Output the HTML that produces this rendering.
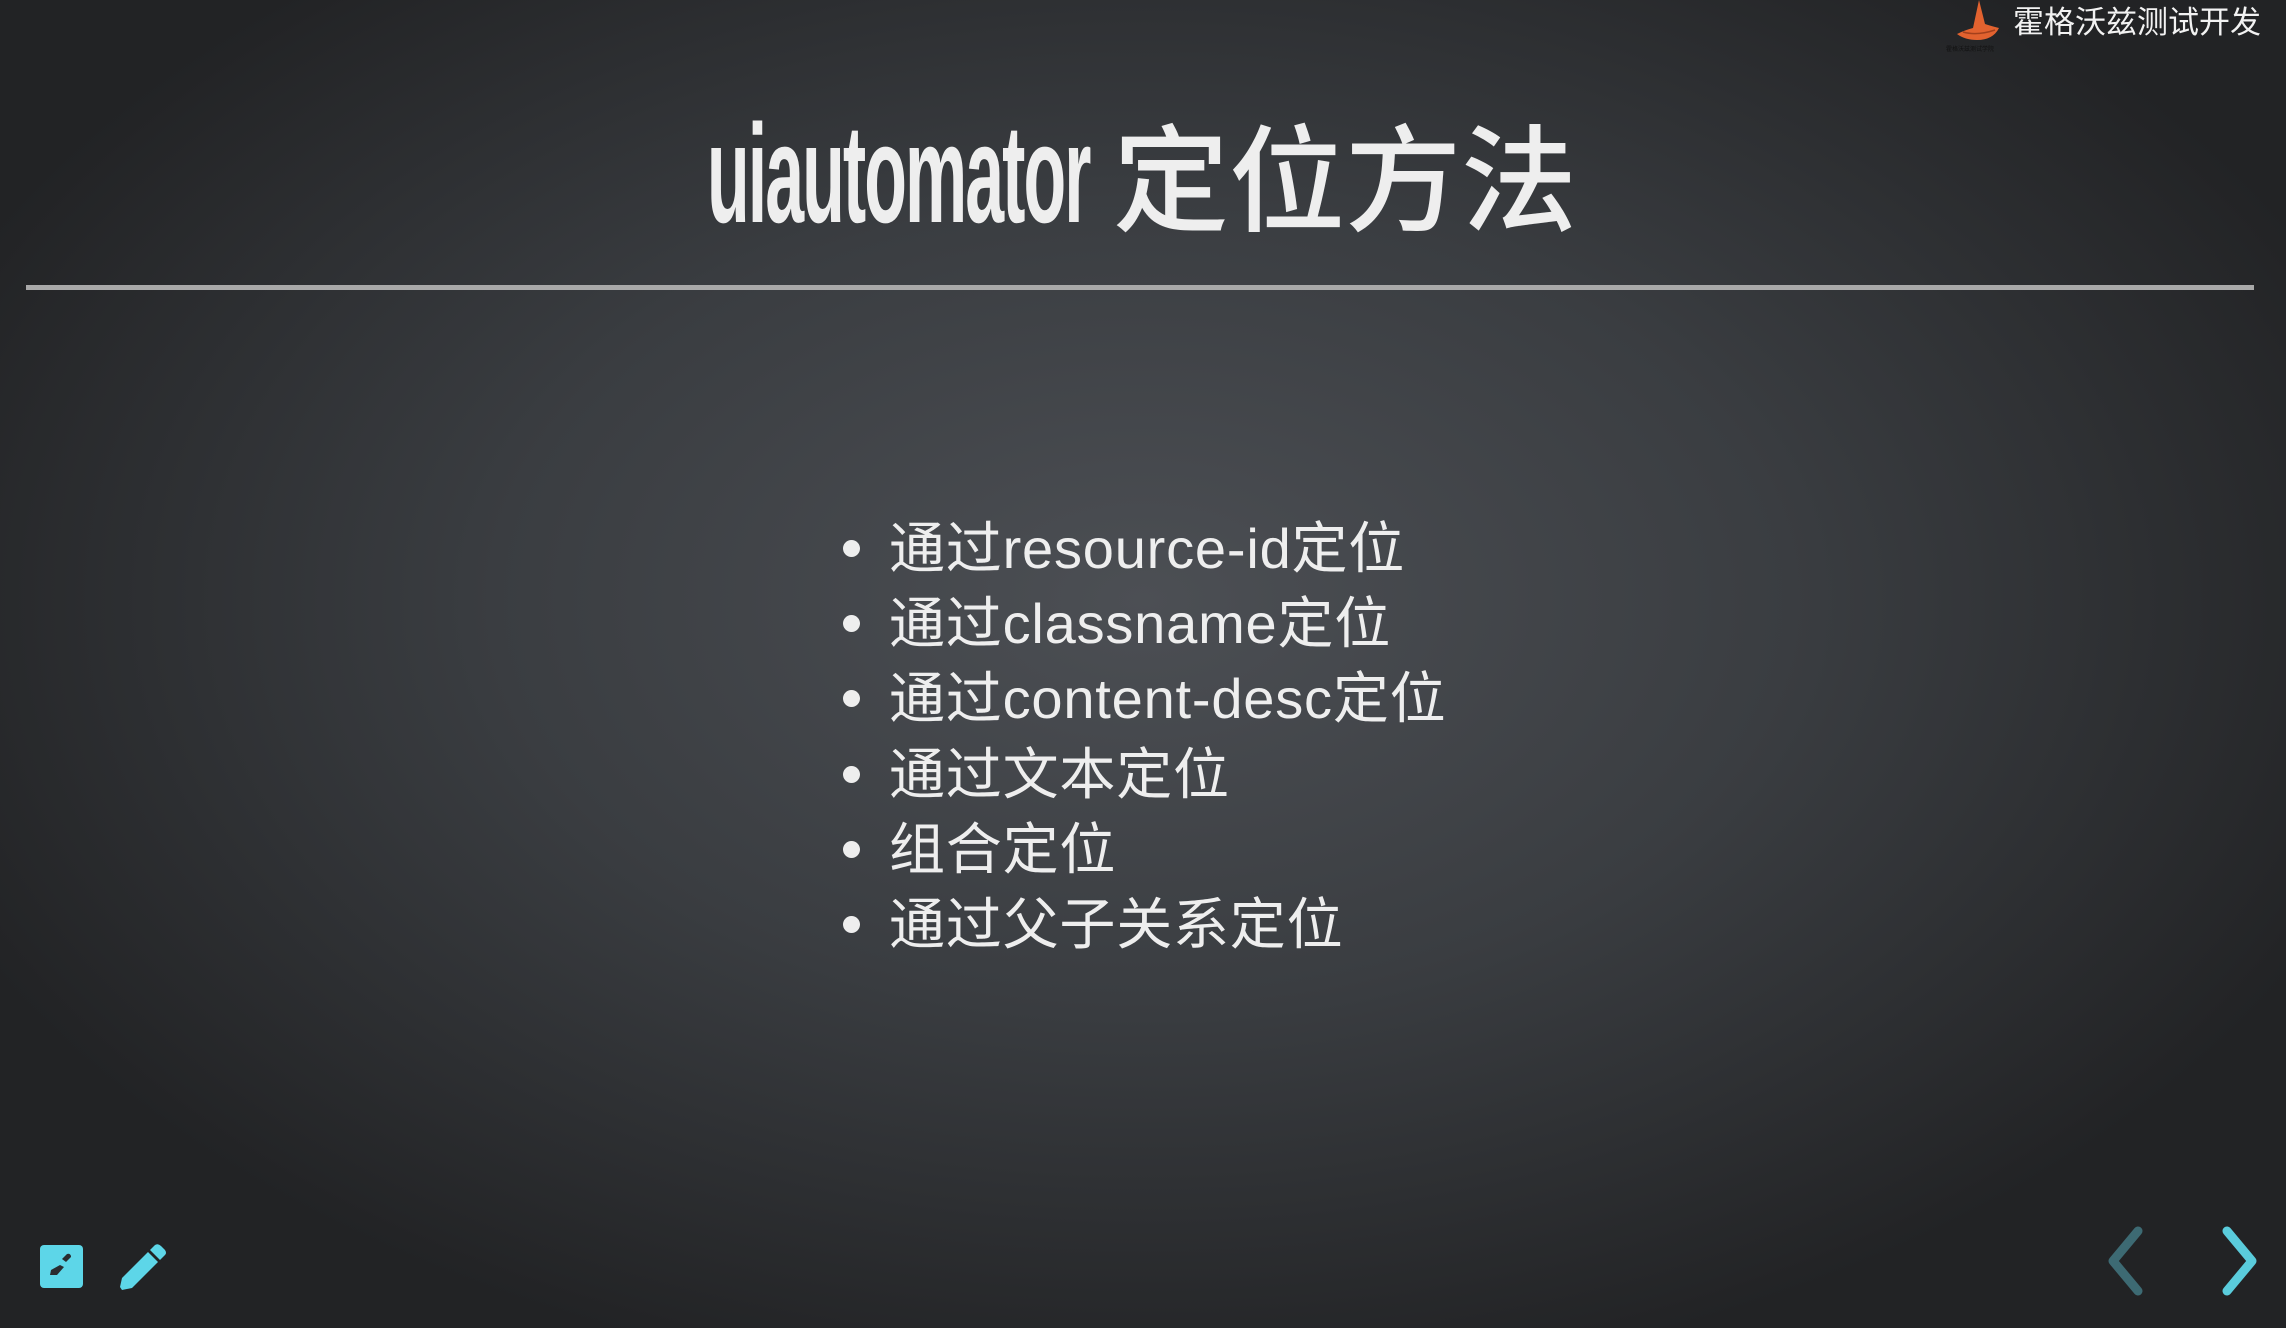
<!DOCTYPE html>
<html><head><meta charset="utf-8"><style>
html,body{margin:0;padding:0;}
body{width:2286px;height:1328px;overflow:hidden;position:relative;
background:radial-gradient(ellipse 1300px 800px at 1143px 600px,#4c4f54 0%,#3a3d41 50%,#222325 100%);
font-family:"Liberation Sans","Noto Sans CJK SC",sans-serif;color:#eeeeee;}
.en{position:absolute;left:707px;top:104px;white-space:nowrap;font-weight:bold;font-size:140px;letter-spacing:-4px;transform:scaleX(0.50);transform-origin:left center;line-height:140px;}
.zh{position:absolute;left:1113px;top:112px;white-space:nowrap;font-size:116px;line-height:140px;font-weight:500}
.rule{position:absolute;left:26px;top:285px;width:2228px;height:5px;background:#a9a9a9;}
ul{position:absolute;left:889px;top:511px;margin:0;padding:0;list-style:none;}
li{font-size:56px;line-height:75.2px;height:75.2px;position:relative;white-space:nowrap;letter-spacing:0.8px}
li:before{content:"";position:absolute;left:-46px;top:29px;width:17px;height:17px;border-radius:50%;background:#eee;}
.logo{position:absolute;left:2013px;top:-3px;font-size:31px;color:#f2f2f2;white-space:nowrap}
.small{position:absolute;left:1946px;top:44px;font-size:6px;color:#111;}
</style></head><body>
<svg style="position:absolute;left:1955px;top:0" width="50" height="44" viewBox="0 0 50 44">
<path d="M24 0 L30 24 Q36 26 44 28 Q38 40 22 40 Q10 40 2 34 Q10 30 18 28 Z" fill="#e2622f"/>
<path d="M8 32 Q22 36 40 30" stroke="#a3401c" stroke-width="1.5" fill="none"/>
</svg>
<div class="small">霍格沃兹测试学院</div>
<div class="logo">霍格沃兹测试开发</div>
<div class="en">uiautomator</div><div class="zh">定位方法</div>
<div class="rule"></div>
<ul>
<li>通过resource-id定位</li>
<li>通过classname定位</li>
<li>通过content-desc定位</li>
<li>通过文本定位</li>
<li>组合定位</li>
<li>通过父子关系定位</li>
</ul>
<svg style="position:absolute;left:40px;top:1245px" width="43" height="43" viewBox="0 0 43 43">
<rect x="0" y="0" width="43" height="43" rx="4" fill="#5dd6e8"/>
<path d="M22 14 L27 9 Q30 8 31 11 L31 12 L26 17 Z" fill="#2a2c2f"/>
<path d="M10 30 L11 25 L20 20 L24 22 L17 30 Z" fill="#2a2c2f"/>
</svg>
<svg style="position:absolute;left:118px;top:1241px" width="52" height="52" viewBox="0 0 52 52">
<path d="M2 46 L4 37 L30 11 L40 21 L14 47 L4 49 Z" fill="#5dd6e8"/>
<path d="M32 9 L37 4 Q40 2 43 5 L47 9 Q49 12 47 14 L42 19 Z" fill="#5dd6e8"/>
</svg>
<svg style="position:absolute;left:2095px;top:1222px" width="175" height="80" viewBox="0 0 175 80">
<path d="M43 9 L18 39 L43 69" stroke="#3d6a73" stroke-width="9" stroke-linecap="round" stroke-linejoin="round" fill="none"/>
<path d="M132 9 L157 39 L132 69" stroke="#5accdc" stroke-width="9" stroke-linecap="round" stroke-linejoin="round" fill="none"/>
</svg>
</body></html>
